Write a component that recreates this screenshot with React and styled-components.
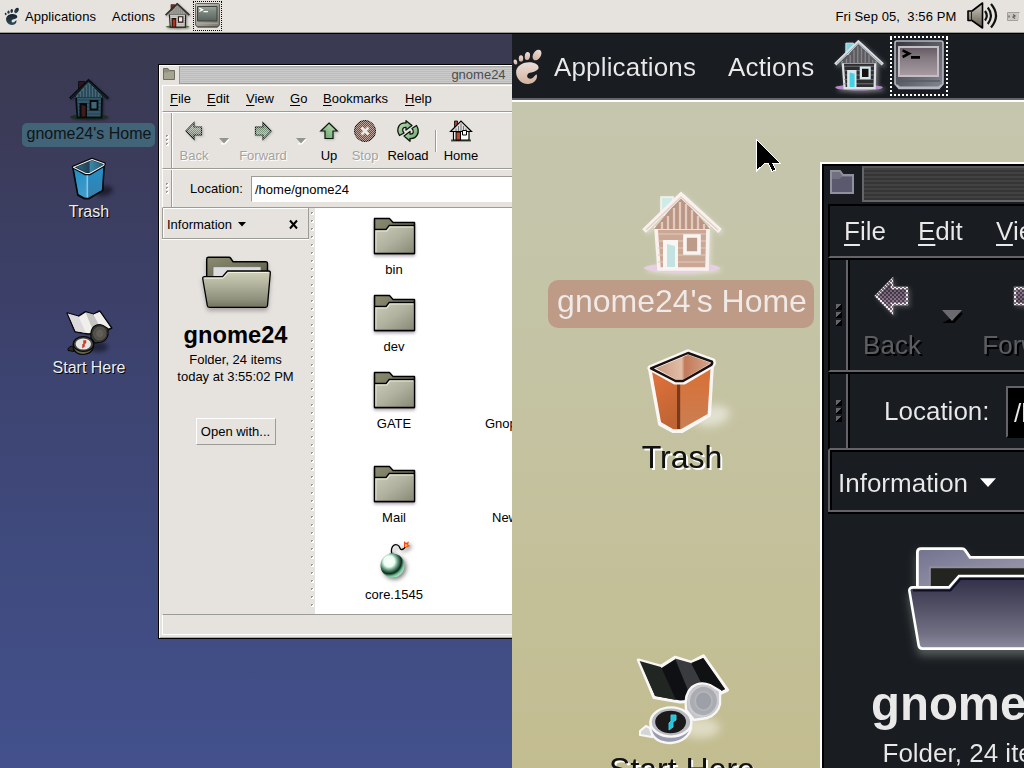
import React from "react";
import styled, { createGlobalStyle, css } from "styled-components";

const GlobalStyle = createGlobalStyle`
  * { box-sizing: border-box; }
  html, body { margin: 0; padding: 0; overflow: hidden; }
  body { font-family: "Liberation Sans", Arial, sans-serif; font-size: 13px; line-height: 17px; color: #000; }
  svg { display: block; flex: none; overflow: visible; }
`;

const FACE = "#e6e3df";
const SHADE = "#9c9c96";

/* ---------- layout shells ---------- */

const Screen = styled.div`
  position: relative;
  width: 1024px;
  height: 768px;
  overflow: hidden;
`;

const Surface = styled.div`
  position: relative;
  display: flex;
  flex-direction: column;
  width: 1024px;
  height: 768px;
  overflow: hidden;
  background: linear-gradient(#3a394f 0, #3b3b58 130px, #3c4069 300px, #3d4471 390px, #3f4a7e 560px, #42508c 768px);
`;

const Lens = styled.div`
  position: absolute;
  left: 512px;
  top: 34px;
  width: 512px;
  height: 734px;
  overflow: hidden;
`;

const Magnified = styled.div`
  width: 1024px;
  height: 768px;
  transform-origin: 0 0;
  transform: translateX(-8px) scale(2);
  filter: invert(1);
  color: #161616;
`;

const Pointer = styled.svg`
  position: absolute;
  left: 756px;
  top: 139px;
`;

/* ---------- top panel ---------- */

const Panel = styled.header`
  display: flex;
  align-items: center;
  height: 34px;
  flex: none;
  padding-left: 4px;
  background: ${FACE};
  border-bottom: 1px solid #000;
  box-shadow: inset 0 -1px 0 ${SHADE};
  white-space: pre;
`;

const PanelMenu = styled.span`
  width: ${(p) => p.$width}px;
  margin-left: ${(p) => p.$left || 0}px;
  padding-bottom: 1px;
  letter-spacing: 0.08px;
`;

const Launcher = styled.div`
  display: flex;
  align-items: center;
  justify-content: center;
  width: 29px;
  height: 30px;
  margin-bottom: 2px;
  ${(p) => p.$focused && css`
    margin-left: 1px;
    border: 1px dotted #000;
  `}
`;

const Tray = styled.div`
  display: flex;
  align-items: center;
  gap: 4.5px;
  margin-left: auto;
  padding: 0 4px 1px 0;
`;

const Clock = styled.span`
  width: 127px;
  letter-spacing: 0.08px;
`;

/* ---------- desktop icons ---------- */

const Workspace = styled.main`
  position: relative;
  flex: 1;
`;

const DesktopIcon = styled.div`
  position: absolute;
  left: 22px;
  top: ${(p) => p.$top}px;
  width: 134px;
  display: flex;
  flex-direction: column;
  align-items: center;
`;

const IconLabel = styled.span`
  height: 24px;
  margin-top: ${(p) => p.$gap}px;
  padding: 0 4px;
  font-size: 16px;
  line-height: 22px;
  white-space: nowrap;
  border-radius: 5px;
  color: ${(p) => (p.$selected ? "#101517" : "#eee")};
  background: ${(p) => (p.$selected ? "#416478" : "transparent")};
  text-shadow: ${(p) => (p.$selected ? "none" : "1px 1px 0 #000")};
  ${(p) => p.$selected && css`padding-left: 5px; margin-left: -1px;`}
`;

/* ---------- file manager window ---------- */

const Window = styled.section`
  position: absolute;
  left: 158px;
  top: 30px;
  width: 642px;
  height: 575px;
  display: flex;
  flex-direction: column;
  background: ${FACE};
  border: 1px solid #000;
  box-shadow: inset 1px 1px 0 #fff, inset -1px -1px 0 #a9aa9f;
  padding: 1px 1px 3px 1px;
  white-space: nowrap;
`;

const TitleBar = styled.div`
  display: flex;
  height: 19px;
  flex: none;
  padding-left: 3px;
`;

const TitleStripes = styled.div`
  flex: 1;
  height: 18px;
  margin: 0 20px 0 4px;
  border: 1px solid #9a9a98;
  border-top-color: #a8a8a6;
  background: repeating-linear-gradient(#bdbdbd 0 1px, #cacaca 1px 2px);
  color: #4c4c4c;
  text-align: center;
  line-height: 15px;
`;

const Bar = styled.div`
  display: flex;
  flex: none;
  height: ${(p) => p.$height}px;
  margin-left: 2px;
  padding-left: ${(p) => p.$inset || 0}px;
  align-items: center;
  border: 1px solid #fff;
  border-right: 0;
  border-bottom-color: ${SHADE};
`;

const MenuItem = styled.span`
  width: ${(p) => p.$width}px;
  u { text-underline-offset: 2px; text-decoration-thickness: 1px; }
`;

const Grip = styled.div`
  display: flex;
  flex-direction: column;
  justify-content: center;
  align-items: center;
  gap: 1px;
  align-self: stretch;
  width: 10px;
  flex: none;
  border-right: 1px solid #fff;
  box-shadow: inset -1px 0 0 ${SHADE};
`;

const Dot = styled.i`
  width: 3px;
  height: 3px;
  background: linear-gradient(135deg, #9b9b96 45%, #fff 46%);
`;

const ToolButton = styled.div`
  display: flex;
  flex-direction: column;
  align-items: center;
  justify-content: space-between;
  width: ${(p) => p.$width}px;
  height: 47px;
  padding-top: 3px;
  margin-left: ${(p) => p.$left || 0}px;
  color: ${(p) => (p.$disabled ? "#a3a29e" : "inherit")};
  text-shadow: ${(p) => (p.$disabled ? "1px 1px 0 #fff" : "none")};
`;

const ToolArrow = styled.div`
  display: flex;
  justify-content: center;
  width: ${(p) => p.$width}px;
  padding-right: 1px;
`;

const Separator = styled.i`
  width: 2px;
  height: 22px;
  margin-left: 3px;
  background: linear-gradient(90deg, ${SHADE} 50%, #fff 50%);
`;

const LocationLabel = styled.span`
  width: 61px;
  margin-left: 17px;
`;

const Entry = styled.div`
  flex: 1;
  height: 26px;
  padding: 4px 3px;
  margin-right: 4px;
  background: #fff;
  border: 1px solid ${SHADE};
  border-right-color: #fff;
  border-bottom-color: #fff;
`;

const Body = styled.div`
  display: flex;
  height: 406px;
  margin-left: 2px;
  flex: none;
`;

const Sidebar = styled.aside`
  width: 147px;
  display: flex;
  flex-direction: column;
  align-items: center;
  text-align: center;
`;

const SideHeader = styled.div`
  display: flex;
  align-items: center;
  width: 147px;
  height: 31px;
  margin-bottom: 13px;
  padding: 2px 10px 0 4px;
  border: 1px solid ${SHADE};
  border-top-width: 0;
  box-shadow: inset 1px 1px 0 #fff, 0 1px 0 #fff;
`;

const SideTitle = styled.span`
  margin-right: 6px;
`;

const FolderName = styled.h1`
  margin: 5px 0 2px;
  font-size: 23.7px;
  line-height: 28px;
  font-weight: bold;
`;

const OpenButton = styled.div`
  width: 80px;
  height: 27px;
  margin-top: 33px;
  line-height: 26px;
  border: 1px solid #fff;
  border-right-color: ${SHADE};
  border-bottom-color: ${SHADE};
`;

const Sash = styled.div`
  width: 6px;
  display: flex;
  flex-direction: column;
  align-items: center;
  gap: 5px;
  padding-top: 4px;
  overflow: hidden;
  i { flex: none; }
`;

const FileGrid = styled.div`
  flex: 1;
  display: grid;
  grid-template-columns: 158px 90px;
  grid-template-rows: 77px 77px 94px 77px 62px;
  padding-top: 8px;
  background: #fff;
`;

const FileItem = styled.div`
  grid-column: 1;
  grid-row: ${(p) => p.$row};
  display: flex;
  flex-direction: column;
  align-items: center;
  justify-content: space-between;
  height: 62px;
`;

const FileLabel = styled.span`
  grid-column: 2;
  grid-row: ${(p) => p.$row};
  padding: 45px 0 0 ${(p) => p.$indent}px;
`;

const StatusBar = styled.div`
  flex: 1;
  margin-left: 2px;
  border: 1px solid #fff;
  border-top-color: ${SHADE};
  border-right: 0;
`;

/* ---------- drawings ---------- */

const SharedPaints = styled.svg`
  position: absolute;
`;

const Paints = () => (
  <SharedPaints width="0" height="0" aria-hidden="true">
    <defs>
      <linearGradient id="folderFront" x1="0" y1="0" x2="1" y2="1">
        <stop offset="0" stopColor="#cccdba" />
        <stop offset="0.5" stopColor="#b0b19e" />
        <stop offset="1" stopColor="#878874" />
      </linearGradient>
      <linearGradient id="bigFront" x1="0" y1="0" x2="0" y2="1">
        <stop offset="0" stopColor="#d0d1b8" />
        <stop offset="0.45" stopColor="#acad98" />
        <stop offset="0.8" stopColor="#8d8e7b" />
        <stop offset="1" stopColor="#73745f" />
      </linearGradient>
      <linearGradient id="folderBack" x1="0" y1="0" x2="1" y2="1">
        <stop offset="0" stopColor="#8b8c70" />
        <stop offset="1" stopColor="#5b5c48" />
      </linearGradient>
      <linearGradient id="binLeft" x1="0" y1="0" x2="0.4" y2="1">
        <stop offset="0" stopColor="#1f8dc4" />
        <stop offset="1" stopColor="#3f9bcb" />
      </linearGradient>
      <linearGradient id="binRight" x1="0" y1="0" x2="0" y2="1">
        <stop offset="0" stopColor="#2490cb" />
        <stop offset="1" stopColor="#3580ac" />
      </linearGradient>
      <linearGradient id="binInside" x1="0" y1="0" x2="1" y2="0">
        <stop offset="0" stopColor="#3a6e88" />
        <stop offset="0.5" stopColor="#1f4258" />
        <stop offset="0.55" stopColor="#3c85a6" />
        <stop offset="1" stopColor="#27566e" />
      </linearGradient>
      <radialGradient id="bombShade" cx="0.36" cy="0.33" r="0.75">
        <stop offset="0" stopColor="#fff" />
        <stop offset="0.3" stopColor="#eafff2" />
        <stop offset="0.5" stopColor="#5a9277" />
        <stop offset="0.68" stopColor="#0f2a1c" />
        <stop offset="0.82" stopColor="#6fc196" />
        <stop offset="1" stopColor="#c4f5da" />
      </radialGradient>
      <linearGradient id="screenGlass" x1="0" y1="0" x2="0" y2="1">
        <stop offset="0" stopColor="#9ba79d" />
        <stop offset="0.35" stopColor="#7d877f" />
        <stop offset="1" stopColor="#56635c" />
      </linearGradient>
      <linearGradient id="monitor" x1="0" y1="0" x2="1" y2="1">
        <stop offset="0" stopColor="#cbc9c2" />
        <stop offset="1" stopColor="#7b776e" />
      </linearGradient>
      <linearGradient id="leaf" x1="0" y1="0" x2="1" y2="1">
        <stop offset="0" stopColor="#c8e9c0" />
        <stop offset="1" stopColor="#5f9a62" />
      </linearGradient>
      <linearGradient id="dimLeaf" x1="0" y1="0" x2="0" y2="1">
        <stop offset="0" stopColor="#a9b8a6" />
        <stop offset="1" stopColor="#527054" />
      </linearGradient>
      <linearGradient id="speaker" x1="0" y1="0" x2="0" y2="1">
        <stop offset="0" stopColor="#d3cec4" />
        <stop offset="1" stopColor="#5d574b" />
      </linearGradient>
      <linearGradient id="footShade" x1="0" y1="0" x2="0" y2="1">
        <stop offset="0" stopColor="#152027" />
        <stop offset="1" stopColor="#2c4d60" />
      </linearGradient>
      <pattern id="stipple" width="2" height="2" patternUnits="userSpaceOnUse">
        <rect width="1" height="1" fill={FACE} />
        <rect x="1" y="1" width="1" height="1" fill={FACE} />
      </pattern>
    </defs>
  </SharedPaints>
);

const Shadowed = styled.svg`
  filter: drop-shadow(${(p) => p.$shadow || "1px 2px 1px rgba(0,0,0,.35)"});
`;

const HOUSE_LIGHT = { wall: "#d2d2cf", gable: "#a3a4a0", line: "#7b7b75", edge: "#26201c", roof: "#6b5f55", door: "#b5301f", frame: "#2a1712", glass: "#e9eef0", grass: "#4d7434", brick: "#7d2c20" };
const HOUSE_DARK = { wall: "#34586a", gable: "#44697a", line: "#1d3541", edge: "#070e12", roof: "#1b2f38", door: "#3c1c1d", frame: "#060a0c", glass: "#416477", grass: "#1a301b", brick: "#321418" };

const House = ({ width, height, paint: c }) => (
  <Shadowed width={width} height={height} viewBox="0 0 40 42" $shadow="1px 1px 1px rgba(0,0,0,.4)">
    <ellipse cx="20" cy="39" rx="19" ry="2.4" fill={c.grass} />
    <path d="M9.5 3.5h6v9h-6z" fill={c.brick} stroke={c.edge} strokeWidth=".8" />
    <path d="M7 19h26l-.5 20.500H8.500z" fill={c.wall} stroke={c.edge} strokeWidth="1.800" />
    <path d="M8 22h24M8 25.500h24M8 29h24M8 32.500h24M8 36h24" stroke={c.line} strokeWidth=".6" />
    <path d="M19.500 3L34 19.500H6z" fill={c.gable} />
    <path d="M10 16v3.500M13 13v6.500M16 9v10.500M19 6v13.500M22 7v12.500M25 10v9.500M28 13v6.500M31 17v2.500" stroke={c.line} strokeWidth="1.100" />
    <path d="M1 20.500L19.500 2.500L39 20.500" fill="none" stroke={c.edge} strokeWidth="2.600" />
    <path d="M2 20L19.500 3.500L38 20" fill="none" stroke={c.roof} strokeWidth=".8" />
    <path d="M10.500 25h7.500v14.500h-7.500z" fill={c.frame} />
    <path d="M12.500 27l4 1v10.500h-4z" fill={c.door} />
    <path d="M21.500 23h7v8.500h-7z" fill={c.glass} stroke={c.frame} strokeWidth="1.800" />
  </Shadowed>
);

const Foot = () => (
  <svg width="16" height="18" viewBox="0 0 16 18">
    <g fill="url(#footShade)">
      <ellipse cx="12.500" cy="2.500" rx="1.900" ry="2.900" transform="rotate(32 12.500 2.500)" />
      <ellipse cx="7.700" cy="3" rx="1.300" ry="2" transform="rotate(8 7.700 3)" />
      <ellipse cx="4.500" cy="4.200" rx="1.100" ry="1.600" />
      <ellipse cx="1.700" cy="6" rx=".9" ry="1.300" transform="rotate(-15 1.700 6)" />
      <path d="M11.700 6.800C8 5.100 3 6.700 2.100 10.300C1.600 14.200 4.800 17.300 8.300 17C11.200 16.700 12.900 14.800 12.400 12.300C11 12.600 11 14.300 9.200 14.400C7.200 14.400 7 12 8.900 11.400C11.200 10.800 13.400 10.100 13.300 8.700C13.200 7.700 12.500 7.200 11.700 6.800z" />
    </g>
  </svg>
);

const Terminal = () => (
  <svg width="25" height="25" viewBox="0 0 25 25">
    <path d="M.5 1.500Q.5.500 1.500.500H23.500Q24.500.500 24.500 1.500V22L22.500 24.200H2.500L.5 22z" fill="url(#monitor)" stroke="#4a473f" strokeWidth=".8" />
    <path d="M2.500 3.500H22V18H2.500z" fill="url(#screenGlass)" stroke="#3b413b" strokeWidth="1" />
    <path d="M4.300 5.200L7.500 6.800L4.300 8.500M8.500 8.700H13" fill="none" stroke="#fff" strokeWidth="1.300" />
    <path d="M1.500 20.500H23" stroke="#a9a59b" strokeWidth=".8" />
    <path d="M1.500 22.500L2.800 23.700H22.300L23.700 22.500" fill="none" stroke="#4a473f" strokeWidth=".8" />
  </svg>
);

const Speaker = () => (
  <svg width="31" height="28" viewBox="0 0 31 28">
    <path d="M1 9H5L15.500 1V26L5 18.500H1z" fill="url(#speaker)" stroke="#000" strokeWidth="1.600" strokeLinejoin="round" />
    <path d="M4.500 9v9.500" stroke="#24211c" strokeWidth="1" />
    <g fill="none" stroke="#111" strokeWidth="2.200">
      <path d="M18 9Q21.500 13.500 18 18.500" />
      <path d="M20.800 5.500Q27 13.500 20.800 22" />
      <path d="M24 2Q34 13.500 24 25.500" />
    </g>
  </svg>
);

const Plug = () => (
  <svg width="13" height="9" viewBox="0 0 13 9">
    <path d="M.5.500H12.500M.5.500V8.500H11" fill="none" stroke="#a4a19b" />
    <path d="M1 1H12V8H1z" fill="#cbc8c2" />
    <path d="M2 3.500v2M6 2.500l2 1.500-2 1 2 1.500" fill="none" stroke="#5e5b56" strokeWidth="1.200" />
  </svg>
);

const Trash = () => (
  <svg width="38" height="44" viewBox="0 0 38 44">
    <ellipse cx="34" cy="35" rx="9" ry="5" fill="#000" opacity=".5" transform="rotate(-12 34 35)" filter="blur(2px)" />
    <path d="M3 11.500L8 39L14.500 42.500H19L32.500 34.500L34 9L18 18z" fill="#1c536f" stroke="#05090b" strokeWidth="2" strokeLinejoin="round" />
    <path d="M4 13L8.500 38L14.700 41.600H18V18.500z" fill="url(#binLeft)" />
    <path d="M18 18.500L33.300 10.500L31.800 34L18 41.800z" fill="url(#binRight)" />
    <path d="M17.300 19v22.500" stroke="#86c5e4" strokeWidth="1.600" />
    <path d="M3 11L22 3L34.500 7.500Q35 9 33.500 10L20 18H15.500z" fill="url(#binInside)" stroke="#05090b" strokeWidth="2.600" strokeLinejoin="round" />
    <path d="M3.500 11.200L22 3.500L34 7.800Q34.500 9 33 9.800L19.500 17.500H15.800z" fill="none" stroke="#e6eef0" strokeWidth="1.200" strokeLinejoin="round" />
  </svg>
);

const MapAndCompass = () => (
  <svg width="48" height="48" viewBox="0 0 48 48">
    <ellipse cx="33" cy="38" rx="10" ry="5" fill="#000" opacity=".45" filter="blur(2px)" />
    <path d="M2.200 4L13.500 7.200L20.500 2.700L28.500 5.200L34.700 2L46.700 19L36 24L23 25L10 22.700z" fill="#f0efec" stroke="#07080a" strokeWidth="1.600" strokeLinejoin="round" />
    <path d="M2.800 4.500L13.500 7.500L21 24L10.500 22z" fill="#ddd9dc" />
    <path d="M20.500 3.200L28.500 5.500L36 20L29 24z" fill="#c6c4c1" />
    <path d="M34.700 3L45.500 18.500L38 20L28.500 5.500z" fill="#efeeec" />
    <path d="M29 17.500Q33 14.500 38 16.500L43 19.500V26Q42 31 36.500 33L30 34L26 29Q25 21 29 17.500z" fill="#3c3b37" stroke="#07080a" strokeWidth="1.200" />
    <ellipse cx="34.700" cy="24.500" rx="7.200" ry="7.600" fill="#55534d" stroke="#34332e" strokeWidth="1" transform="rotate(20 34.700 24.500)" />
    <ellipse cx="34.800" cy="24.500" rx="4.200" ry="4.600" fill="#625f58" stroke="#4b4943" strokeWidth=".8" />
    <path d="M3 39.500L6 37L9 38.500V42.500L3 41.500z" fill="#2b2a27" stroke="#07080a" />
    <path d="M8.300 35V39Q10 45.500 18.500 45.500Q27 44.500 28.500 38V34z" fill="#68634f" stroke="#07080a" strokeWidth="1.200" />
    <ellipse cx="18.500" cy="35" rx="10.200" ry="7.300" fill="#48463f" stroke="#07080a" strokeWidth="1.200" />
    <ellipse cx="18.300" cy="35" rx="7.700" ry="5.600" fill="#e4e6e5" />
    <path d="M18.500 31.500h2.500v2.500l-1.500 1v2.500l-2 1.500v-3.500l1-1z" fill="#dd3a24" stroke="#c63422" strokeWidth=".5" />
  </svg>
);

const Folder = () => (
  <Shadowed width="45" height="41" viewBox="0 0 45 41" $shadow="0 2px 1.500px rgba(40,20,50,.35)">
    <path d="M2.500 2.500H17.500L21 6.500H42.500V37.500H2.500z" fill="url(#folderBack)" stroke="#000" strokeWidth="1.300" strokeLinejoin="round" />
    <path d="M3 13.500H14.500L17.500 9.500H42.500V37.500H2.500z" fill="url(#folderFront)" />
    <path d="M2.500 13.500H14L17.200 9.500H42.500" fill="none" stroke="#000" strokeWidth="1.300" />
    <path d="M3.800 36.500V15H14.800L18 11H41.300" fill="none" stroke="#e9ead9" strokeWidth="1.200" />
    <path d="M42.500 6.500V37.500H2.500V2.500" fill="none" stroke="#000" strokeWidth="1.300" strokeLinejoin="round" />
  </Shadowed>
);

const OpenFolder = () => (
  <Shadowed width="72" height="64" viewBox="0 0 72 64" $shadow="0 3px 2px rgba(40,20,30,.3)">
    <path d="M6.700 26V7Q6.700 5.300 8.500 5.300H29Q30 5.300 30.500 6L33 9.700H66Q67.500 9.700 67.500 11.500V24z" fill="url(#folderBack)" stroke="#000" strokeWidth="1.400" />
    <path d="M13 14.700H61V26H13z" fill="#dcdce0" stroke="#6e6f5f" strokeWidth=".8" />
    <path d="M2.700 26.500Q2.500 24.700 4.500 24.700H22.500L27.500 19H68.700Q70.500 19 70.300 21L67.500 53.500Q67.300 55.300 65.500 55.300H9.200Q7.500 55.300 7.300 53.500z" fill="url(#bigFront)" stroke="#000" strokeWidth="1.300" />
    <path d="M4.500 26.200H23.200L28.200 20.500H68.500" fill="none" stroke="#f0f0dc" strokeWidth="1" />
  </Shadowed>
);

const SmallFolder = () => (
  <svg width="12" height="17" viewBox="0 0 12 17">
    <path d="M.5 2.500H5L6.500 4.500H11.500V13.500H.5z" fill="#8e8f7c" stroke="#6e6f60" />
    <path d="M1 6.500H4.500L6 5.500H11V13H1z" fill="#a5a692" />
  </svg>
);

const Bomb = () => (
  <Shadowed width="34" height="41" viewBox="0 0 34 41" $shadow="2px 2px 2px rgba(0,0,0,.5)">
    <path d="M15 14C13 6 17 2.500 20.500 4C24 5.500 22 9 25 8.500Q27.500 8 29 4.500" fill="none" stroke="#000" strokeWidth="1.300" />
    <path d="M12.500 12.500L16.500 11.500V16H13z" fill="#6b7a71" />
    <circle cx="15.500" cy="24.500" r="12" fill="url(#bombShade)" />
    <path d="M27 0L29 2L32 .500L31 3.500L33 5L29.500 6.500L27 6z" fill="#ef4b1d" />
    <path d="M28 3L31 4L28 6.500z" fill="#ffd22e" />
  </Shadowed>
);

const ArrowGlyph = ({ turn = 0, disabled }) => (
  <Shadowed width="24" height="22" viewBox="0 0 24 22" $shadow="1px 1px 1px rgba(0,0,0,.2)">
    <g transform={`rotate(${turn} 12 11)`}>
      <path
        d="M4 11L12 2.800V7H19.500V15H12V19.200z"
        fill={disabled ? "url(#dimLeaf)" : "url(#leaf)"}
        stroke="#0b160c"
        strokeWidth="1.200"
      />
      {disabled && <path d="M3 11L12.500 1.500V6.500H20.500V15.500H12.500V20.500z" fill="url(#stipple)" opacity=".6" />}
    </g>
  </Shadowed>
);

const StopGlyph = () => (
  <svg width="22" height="22" viewBox="0 0 22 22">
    <circle cx="11" cy="11" r="10.500" fill="#85452f" stroke="#000" />
    <circle cx="11" cy="11" r="11.200" fill="url(#stipple)" opacity=".6" />
    <path d="M7.500 7.500L14.500 14.500M14.500 7.500L7.500 14.500" stroke="#ece8e6" strokeWidth="2.600" />
  </svg>
);

const ReloadGlyph = () => (
  <svg width="24" height="22" viewBox="0 0 24 22">
    <g fill="url(#leaf)" stroke="#0b160c" strokeWidth="1.300" strokeLinejoin="round">
      <path d="M3.500 15.500C-.5 9 3 2.500 10 3V.700L16 5.500L10 10V7.500C6.500 7 5.500 10 8 13z" />
      <path d="M20.500 5.500C24.500 12 21 19 14 18.500V21.300L8 16L14 11.500V14C17.500 14.500 18.500 11.500 16 8.500z" />
    </g>
  </svg>
);

const HomeGlyph = () => (
  <svg width="24" height="22" viewBox="0 0 24 22">
    <path d="M2 20.500H22" stroke="#405a38" strokeWidth="2" />
    <path d="M5.500 1H8.500V7H5.500z" fill="#a4432e" stroke="#000" strokeWidth=".8" />
    <path d="M4.500 10H20V20H4.500z" fill="#fff" stroke="#000" strokeWidth="1.200" />
    <path d="M1.500 11.500L12 1L22.500 11.500z" fill="#dcdcda" stroke="#000" strokeWidth="1.200" />
    <path d="M7 8.500V11M9.500 6V11M12 3.500V11M14.500 6V11M17 8.500V11" stroke="#77777a" />
    <path d="M7 12H11.500V20H7z" fill="#b84a35" stroke="#000" />
    <path d="M13.500 10.500H17.500V15H13.500z" fill="#fff" stroke="#000" />
  </svg>
);

const Caret = ({ disabled, width = 8 }) => (
  <svg width={width} height={width / 2 + 1} viewBox="0 0 10 6">
    {disabled && <path d="M2 6L10 1.500L6 6z" fill="#fff" stroke="#fff" />}
    <path d="M0 0H10L5 5.500z" fill={disabled ? "#949490" : "#000"} />
  </svg>
);

const CloseGlyph = styled.svg`
  margin-left: auto;
`;

/* ---------- pieces ---------- */

const GripHandle = () => (
  <Grip><Dot /><Dot /><Dot /></Grip>
);

const menus = [
  ["File", 37], ["Edit", 39], ["View", 44], ["Go", 33], ["Bookmarks", 82], ["Help", 40],
];

const files = ["bin", "dev", "GATE", "Mail", "core.1545"];

/* `corner` renders only the upper-left portion that fits inside the lens. */
function FileWindow({ corner }) {
  return (
    <Window>
      <TitleBar>
        <SmallFolder />
        <TitleStripes>{!corner && "gnome24"}</TitleStripes>
      </TitleBar>
      <Bar $height={27} $inset={7}>
        {(corner ? menus.slice(0, 3) : menus).map(([name, width]) => (
          <MenuItem key={name} $width={width}><u>{name[0]}</u>{name.slice(1)}</MenuItem>
        ))}
      </Bar>
      <Bar $height={57}>
        <GripHandle />
        <ToolButton $width={36} $left={3} $disabled><ArrowGlyph disabled />Back</ToolButton>
        <ToolArrow $width={25}><Caret disabled width={10} /></ToolArrow>
        <ToolButton $width={50} $left={1} $disabled><ArrowGlyph turn={180} disabled />Forward</ToolButton>
        {!corner && (
          <>
            <ToolArrow $width={27}><Caret disabled width={10} /></ToolArrow>
            <ToolButton $width={28}><ArrowGlyph turn={90} />Up</ToolButton>
            <ToolButton $width={36} $left={4} $disabled><StopGlyph />Stop</ToolButton>
            <ToolButton $width={48} $left={1}><ReloadGlyph />Reload</ToolButton>
            <Separator />
            <ToolButton $width={44} $left={2}><HomeGlyph />Home</ToolButton>
          </>
        )}
      </Bar>
      <Bar $height={39}>
        <GripHandle />
        <LocationLabel>Location:</LocationLabel>
        <Entry>/home/gnome24</Entry>
      </Bar>
      <Body>
        <Sidebar>
          <SideHeader>
            <SideTitle>Information</SideTitle>
            <Caret />
            <CloseGlyph width="9" height="9" viewBox="0 0 9 9">
              <path d="M1 .5L8 8.500M8 .5L1 8.500" stroke="#000" strokeWidth="2" />
            </CloseGlyph>
          </SideHeader>
          <OpenFolder />
          <FolderName>gnome24</FolderName>
          <span>Folder, 24 items</span>
          {!corner && (
            <>
              <span>today at 3:55:02 PM</span>
              <OpenButton>Open with...</OpenButton>
            </>
          )}
        </Sidebar>
        <Sash>{Array.from({ length: 50 }, (_, i) => <Dot key={i} />)}</Sash>
        <FileGrid>
          {!corner && (
            <>
              {files.map((name, i) => (
                <FileItem key={name} $row={i + 1}>
                  {name === "core.1545" ? <Bomb /> : <Folder />}
                  {name}
                </FileItem>
              ))}
              <FileLabel $row={3} $indent={12}>Gnop</FileLabel>
              <FileLabel $row={4} $indent={19}>New</FileLabel>
            </>
          )}
        </FileGrid>
      </Body>
      <StatusBar />
    </Window>
  );
}

function Desktop({ corner }) {
  return (
    <Surface>
      <Panel>
        <Foot />
        <PanelMenu $width={87} $left={5}>Applications</PanelMenu>
        <PanelMenu $width={51}>Actions</PanelMenu>
        <Launcher><House width={25} height={27} paint={HOUSE_LIGHT} /></Launcher>
        <Launcher $focused><Terminal /></Launcher>
        {!corner && (
          <Tray>
            <Clock>Fri Sep 05,  3:56 PM</Clock>
            <Speaker />
            <span />
            <Plug />
          </Tray>
        )}
      </Panel>
      <Workspace>
        <DesktopIcon $top={44}>
          <House width={40} height={42} paint={HOUSE_DARK} />
          <IconLabel $gap={3} $selected>gnome24's Home</IconLabel>
        </DesktopIcon>
        <DesktopIcon $top={122}>
          <Trash />
          <IconLabel $gap={1}>Trash</IconLabel>
        </DesktopIcon>
        <DesktopIcon $top={275}>
          <MapAndCompass />
          <IconLabel $gap={0}>Start Here</IconLabel>
        </DesktopIcon>
        <FileWindow corner={corner} />
      </Workspace>
    </Surface>
  );
}

export default function App() {
  return (
    <Screen>
      <GlobalStyle />
      <Paints />
      <Desktop />
      <Lens>
        <Magnified><Desktop corner /></Magnified>
      </Lens>
      <Pointer width="25" height="34" viewBox="0 0 25 34" shapeRendering="crispEdges">
        <path d="M.5 .500L24 24H16.500L20 31L16 32.500L12.500 25L9 24L.5 32z" fill="#000" stroke="#fff" />
      </Pointer>
    </Screen>
  );
}
